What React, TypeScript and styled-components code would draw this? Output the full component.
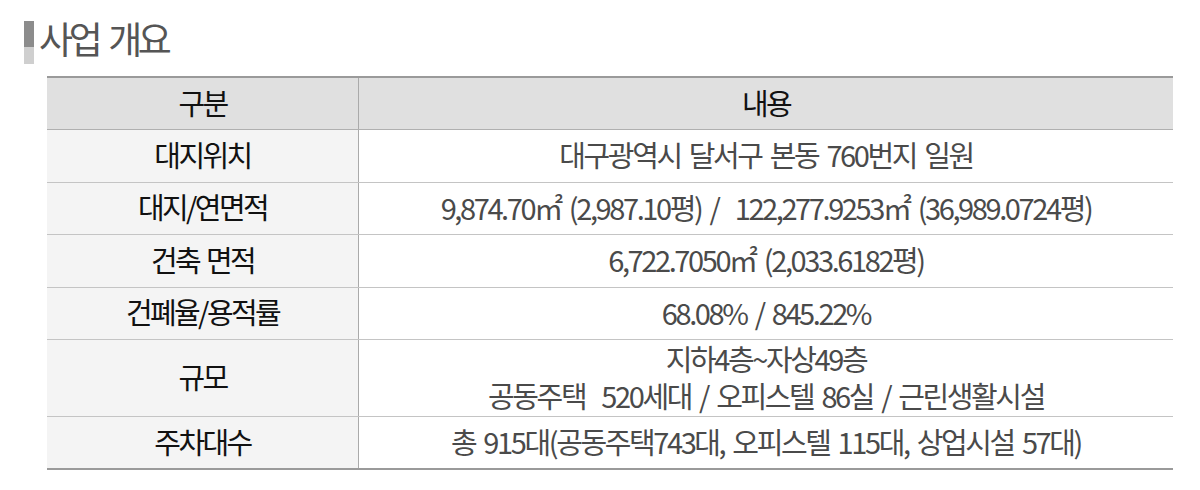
import { createGlobalStyle, styled } from "styled-components";

const GlobalStyle = createGlobalStyle`
    body {
        margin: 0;
        background: #fff;
        font-family: 'Noto Sans CJK KR', 'Noto Sans', sans-serif;
    }
`;

const StyledOverview = styled.section`
    width: 1200px;
    height: 490px;
    padding: 21px 27px 0 24px;
    box-sizing: border-box;
`;

const TitleRow = styled.div`
    display: flex;
    align-items: flex-start;
    gap: 5px;
    height: 55px;
`;

const TitleMark = styled.span`
    display: block;
    width: 10px;
    height: 43px;
    background: linear-gradient(to bottom, #8c8c8c 0, #8c8c8c 26px, #cfcfcf 26px, #cfcfcf 100%);
`;

const Title = styled.h2`
    margin: -8px 0 0;
    font-size: 37px;
    font-weight: 400;
    line-height: 50px;
    letter-spacing: -4.4px;
    word-spacing: 6px;
    color: #555;
`;

const Table = styled.table`
    margin-left: 23px;
    width: 1126px;
    border-collapse: collapse;
    border-top: 2px solid #9a9a9a;
    border-bottom: 2px solid #9a9a9a;
    table-layout: fixed;
`;

const HeadCell = styled.th`
    height: 48px;
    padding: 0 0 3px;
    background: #e0e0e0;
    border-bottom: 1px solid #b0b0b0;
    font-size: 29px;
    font-weight: 400;
    letter-spacing: -2.6px;
    color: #111;
    &:first-child {
        width: 311px;
        border-right: 1px solid #aaa;
    }
`;

const Row = styled.tr<{ $tall?: boolean }>`
    height: ${(p) => (p.$tall ? "76px" : "52.5px")};
    &:not(:last-child) td {
        border-bottom: 1px solid #c4c4c4;
    }
`;

const LabelCell = styled.td`
    padding: 0 0 4px;
    background: #f4f4f4;
    border-right: 1px solid #aaa;
    text-align: center;
    font-size: 29px;
    letter-spacing: -2.6px;
    word-spacing: 3px;
    color: #111;
`;

const ValueCell = styled.td`
    padding: 0 0 2px;
    text-align: center;
    font-size: 29px;
    line-height: 37px;
    letter-spacing: -2.4px;
    word-spacing: 4px;
    color: #4a4a4a;
`;

const Line = styled.div`
    white-space: pre;
`;

const rows: [string, string[]][] = [
    ["대지위치", ["대구광역시 달서구 본동 760번지 일원"]],
    ["대지/연면적", ["9,874.70㎡ (2,987.10평) /  122,277.9253㎡ (36,989.0724평)"]],
    ["건축 면적", ["6,722.7050㎡ (2,033.6182평)"]],
    ["건폐율/용적률", ["68.08% / 845.22%"]],
    ["규모", ["지하4층~자상49층", "공동주택  520세대 / 오피스텔 86실 / 근린생활시설"]],
    ["주차대수", ["총 915대(공동주택743대, 오피스텔 115대, 상업시설 57대)"]],
];

const App = () => {
    return (
        <StyledOverview>
            <GlobalStyle />
            <TitleRow>
                <TitleMark />
                <Title>사업 개요</Title>
            </TitleRow>
            <Table>
                <thead>
                    <tr>
                        <HeadCell>구분</HeadCell>
                        <HeadCell>내용</HeadCell>
                    </tr>
                </thead>
                <tbody>
                    {rows.map(([label, lines]) => (
                        <Row key={label} $tall={lines.length > 1}>
                            <LabelCell>{label}</LabelCell>
                            <ValueCell>
                                {lines.map((line, i) => (
                                    <Line key={i}>{line}</Line>
                                ))}
                            </ValueCell>
                        </Row>
                    ))}
                </tbody>
            </Table>
        </StyledOverview>
    );
};

export default App;
